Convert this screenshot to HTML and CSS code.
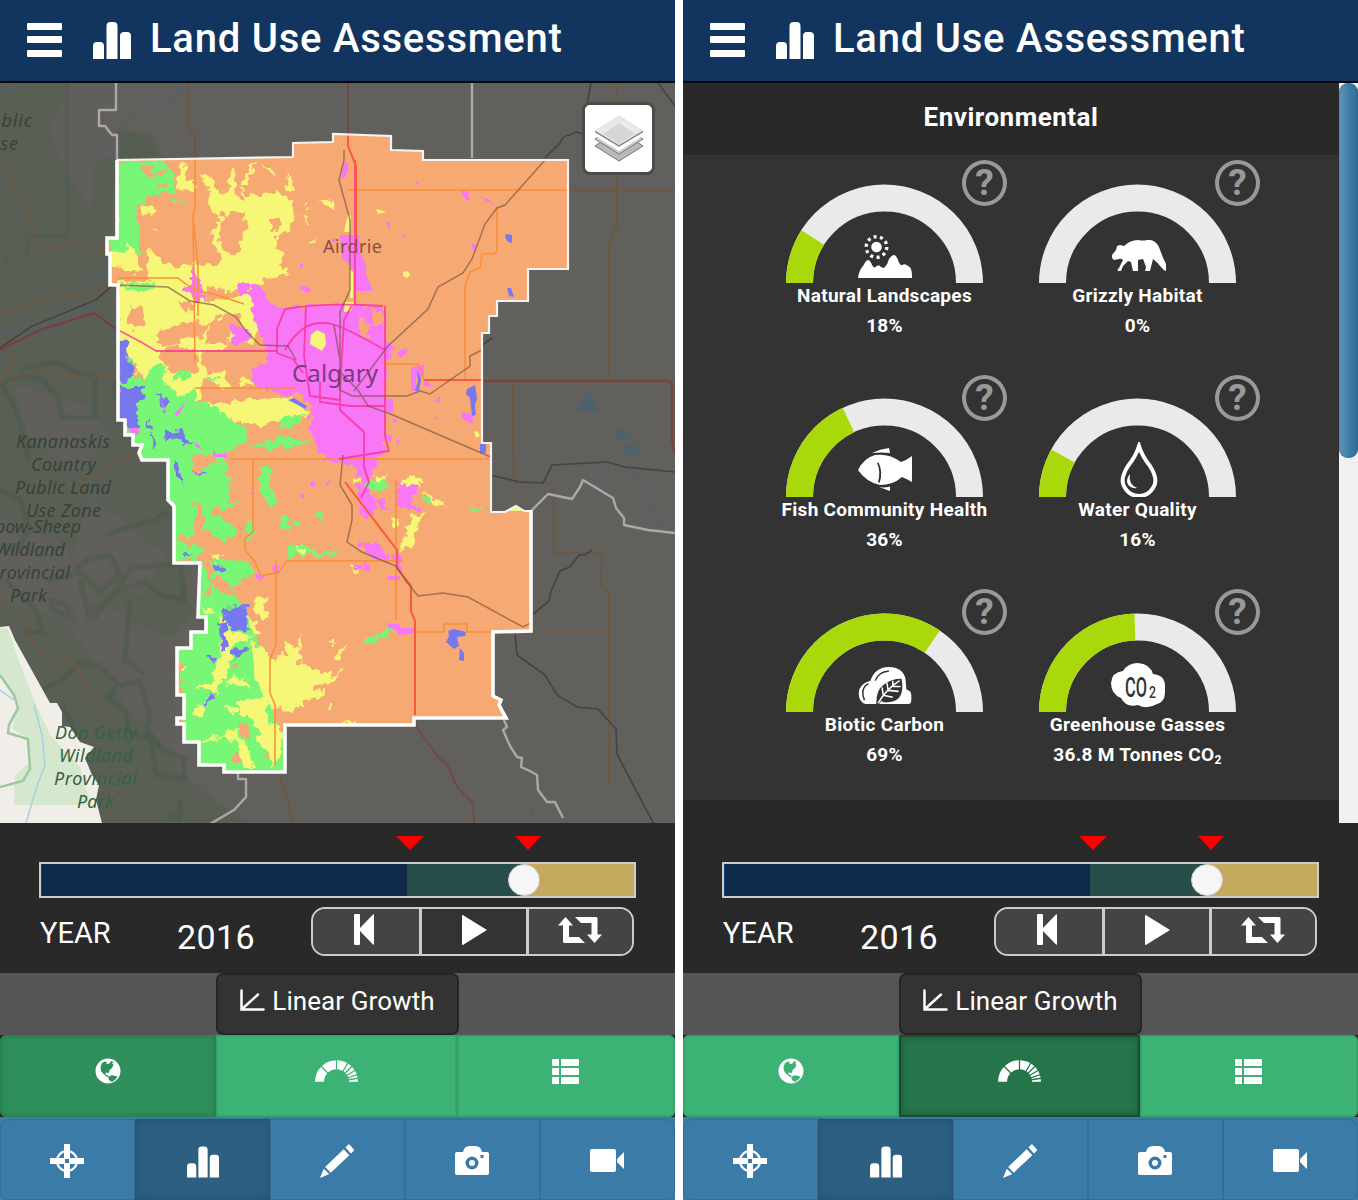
FILE: index.html
```html
<!DOCTYPE html>
<html lang="en">
<head>
<meta charset="utf-8">
<title>Land Use Assessment</title>
<link rel="stylesheet" href="styles.css">
</head>
<body>
<svg class="sprite" aria-hidden="true">
  <symbol id="i-menu" viewBox="0 0 35 34"><path d="M1 0h33q1 0 1 1v5q0 1-1 1H1q-1 0-1-1V1q0-1 1-1zm0 13h33q1 0 1 1v5q0 1-1 1H1q-1 0-1-1v-5q0-1 1-1zm0 14h33q1 0 1 1v5q0 1-1 1H1q-1 0-1-1v-5q0-1 1-1z"/></symbol>
  <symbol id="i-bars" viewBox="0 0 38 37"><path d="M0 37V24q0-4 4-4h3q4 0 4 4v13zM13.500 37V4q0-4 4-4h3q4 0 4 4v33zM27 37V14q0-4 4-4h3q4 0 4 4v23z"/></symbol>
  <symbol id="i-target" viewBox="0 0 34 34"><circle cx="17" cy="17" r="10" fill="none" stroke="currentColor" stroke-width="2.200"/><path fill-rule="evenodd" d="M14 0h6v14h14v6H20v14h-6V20H0v-6h14zM15 15v4h4v-4z"/></symbol>
  <symbol id="i-pencil" viewBox="0 0 34 34"><path d="M25.500 3.500 28 .7q.8-.8 1.700 0l4 4.600q.6.800-.2 1.600L31 9.500zM23.700 5.200l5.600 6-18.500 17.500-5.700-5.800zM3.700 24.700l5.600 5.400L0 34z"/></symbol>
  <symbol id="i-camera" viewBox="0 0 34 29"><path fill-rule="evenodd" d="M2 6h6q1-6 7-6h5q6 0 7 6h5q2 0 2 2v19q0 2-2 2H2q-2 0-2-2V8q0-2 2-2zm15 4.500a6.500 6.500 0 1 0 0 13 6.500 6.500 0 0 0 0-13zM25.500 9v3h3V9z"/><circle cx="17" cy="17" r="3"/></symbol>
  <symbol id="i-video" viewBox="0 0 34 23"><path d="M2 0h22q2 0 2 2v19q0 2-2 2H2q-2 0-2-2V2q0-2 2-2zM27 10l7-7v17l-7-7z"/></symbol>
  <symbol id="i-list" viewBox="0 0 27 25"><path d="M0 1q0-1 1-1h6v7H1q-1 0-1-1zM9 0h17q1 0 1 1v5q0 1-1 1H9zM0 10q0-1 1-1h6v7H1q-1 0-1-1zM9 9h17q1 0 1 1v5q0 1-1 1H9zM0 19q0-1 1-1h6v7H1q-1 0-1-1zM9 18h17q1 0 1 1v5q0 1-1 1H9z"/></symbol>
  <symbol id="i-globe" viewBox="0 0 26 26"><path fill-rule="evenodd" d="M13 .5a12.500 12.500 0 1 0 0 25 12.500 12.500 0 0 0 0-25zM10 3.500l2 .5-1 1.500 2 .5 2-1 1-2 3 1-2 1 1.500 2-1.500 3-2.500 2-.5 3-2.500-.5-1.500 1 1.500 1.500 1.500.5 1 2-2-.5-4-3.500L6 13l-.5-4L7 5zM14.500 18l3-.8 5 1.300-1.500 2.500-4 3-3-2-.5-2z"/></symbol>
  <symbol id="i-dial" viewBox="0 0 43 21.500"><path fill="none" stroke="currentColor" stroke-width="9" d="M4.500 21.500a17 17 0 0 1 34 0"/><path class="dial-cut" d="M21.500 21.500 4 4M21.500 21.500V0M21.500 21.500 34 1M21.500 21.500 37.500 5.500M21.500 21.500 41 9.500M21.500 21.500 43 14M21.500 21.500 43 18"/></symbol>
  <symbol id="i-prev" viewBox="0 0 20 31"><path d="M0 1q0-1 1-1h4q1 0 1 1v13L19 .5q1-.7 1 .5v29q0 1.200-1 .5L6 17v13q0 1-1 1H1q-1 0-1-1z"/></symbol>
  <symbol id="i-play" viewBox="0 0 25 30"><path d="M0 1q0-1.500 1.200-.7L25 15 1.200 29.700Q0 30.500 0 29z"/></symbol>
  <symbol id="i-repeat" viewBox="0 0 44 26"><path d="M7.500 0 15 8.500h-4V20H21l6 6H6.500q-1.500 0-1.500-1.500v-16H0zM17 0h21q1.500 0 1.500 1.500v16H44L36.500 26 29 17.500h4.500V6H23z"/></symbol>
  <symbol id="i-chart" viewBox="0 0 25 22"><path fill="none" stroke="currentColor" stroke-width="2.500" stroke-linecap="round" d="M1.500 1.500v19H23.500M2 20 18 5.500"/></symbol>
  <symbol id="g-land" viewBox="0 0 54 44"><circle cx="18.500" cy="13" r="5.300"/><circle cx="18.500" cy="13" r="10.300" fill="none" stroke="currentColor" stroke-width="3.300" stroke-dasharray="3 3.472"/><path d="M0 44q1-8 5-12 3-6 5-6t4 5q2 4 4 1.500 3-2 5 .5l3 1q4-4 5-9 3-4 5-4t4 5q2 6 4 5 3-2 6 1 4 1 4 10v2z"/></symbol>
  <symbol id="g-bear" viewBox="0 0 54 32"><path d="M0 15l4-5 1-4 3-1 4 1q6-6 14-6 5 1 9 0 8-1 12 7 3 9 7 17v7q-3-1-5-4-3-4-8-8l-3 12h-5l1-4-3-8-5 1v11h-5q-1-4-2-9l-3-1-5 5-2 5H6q-1-2 1-3l4-8q-2-2-4-1l-5 1q-2-1-2-3z"/></symbol>
  <symbol id="g-fish" viewBox="0 0 54 43"><path fill-rule="evenodd" d="M0 22Q6 10 17 7q14-2 26 7 6-2 11-6v26q-5-3-10-5-9 8-22 8Q8 34 0 22zM19 15q4 8 1 19l1.500 1q4-11-1-20.500z"/><path d="M14 5q8-4 17-5l1 5q-9-1-18 0zM21 39q5 1 11-.5V43z"/></symbol>
  <symbol id="g-drop" viewBox="0 0 38 56"><path fill="none" stroke="currentColor" stroke-width="4" d="M19 4q3 10 11 20 9 14 3 22-5 8-14 8T5 46q-6-8 3-22Q16 14 19 4z"/><path d="M10 32q-2 10 7 14-8 1-10-6 0-5 3-8z"/></symbol>
  <symbol id="g-carbon" viewBox="0 0 54 39"><path d="M7 38q-7-2-7-11 0-10 12-13Q17 0 31 0q14 0 17 12l1 11q5 1 5 6v5q0 4-4 4z"/><path class="ink" d="M18 38q0-15 8-20 7-6 18-6 4 22-12 24-6 1-9-1l-2 3z"/><path fill="none" stroke="#fff" stroke-width="1.600" d="M20 37Q28 23 42 14M25 28l-1-7M30 23l-1-7M35 19v-5M25 29l10 2M30 24l11 1M35 20h8"/><path class="ink-line" d="M10 17Q1 22 6 34M17 14q3-9 14-10"/></symbol>
  <symbol id="g-co2" viewBox="0 0 54 45"><path d="M10 35Q0 31 0 20 1 9 12 8q5-8 15-8 12 1 15 11 12 1 12 12v6q0 10-8 12-10 6-19 1-12 3-17-7z"/><text class="co2" x="14" y="34" textLength="22" lengthAdjust="spacingAndGlyphs" font-size="28">CO</text><text class="co2" x="38" y="35" font-size="17" textLength="7" lengthAdjust="spacingAndGlyphs">2</text></symbol>
</svg>

<main class="screens">
  <section class="screen">
    <header class="bar">
      <svg class="menu"><use href="#i-menu"/></svg>
      <svg class="logo"><use href="#i-bars"/></svg>
      <h1>Land Use Assessment</h1>
    </header>
    <div class="view">
      <svg class="map" viewBox="0 83 675 740">
        <defs>
          <clipPath id="region"><path d="M117 160 293 157V143L333 142V134L391 136V150L423 151V160H568V269H528V301H497V316H489V333H482V443H491V512H505L516 506 524 511H531V631L493 632V696L501 700 499 705 506 718H414V725H285V772H224V765H199V742H184V724H177V718H184V695H177V648H191V632H206V617H198L200 563H174V506L168 500V460H142L139 453 142 445H133V435H125V420H118V285H110V254H107V238H117Z"/></clipPath>
          <filter id="ragged" x="-2%" y="-2%" width="104%" height="104%"><feTurbulence type="fractalNoise" baseFrequency=".13" numOctaves="2" seed="9"/><feDisplacementMap in="SourceGraphic" scale="12" xChannelSelector="R" yChannelSelector="G"/><feGaussianBlur stdDeviation=".4"/></filter>
          <filter id="soft"><feGaussianBlur stdDeviation="1.200"/></filter>
        </defs>
        <rect y="83" width="675" height="740" fill="#62605d"/>
        <!-- foothills and forest reserves -->
        <g filter="url(#soft)">
          <path fill="#5a5f56" d="M0 83h112l-10 40 14 37-5 78 8 182 52 40 5 100 20 50-25 30 5 130 70 53H100L0 625z"/>
          <path fill="#615f5c" opacity=".8" d="M70 83h45v75H95l-5 50-30-50-10-30zM15 385l70 20 25 30-30 40-55-40zM0 520l60 20 20 40 45 40 50 20 5 120-50-50-65-90L0 600zM90 495l75 60-20 40-80-10z"/>
          <path fill="#555d51" d="M117 130l35 5 10 23h-45z"/>
          <g class="reserve">
            <path d="M67 83V236H27v20H8L0 268" stroke-width="2"/>
            <path d="M20 370l35-8 20 10 20 4v42H62l-4-20-15-18-15-4-28 6 12 20 10 25 6 34M115 380v20M105 535l30-10 20-5 10-8 15 10M75 570l15-12 20-3 10 20-20 16-20-18-35 8M95 610l16-12 20-30 50-4 3 36-20-4-20-14-28 10-20 24-4-10M50 600l16 4 6 14-18-7zM40 690l20-8 20-20 20 4 20 20 20-6 10 36-4 22-18-6-2-20-18-14 10-14M150 735l6 40 28 4v-20l-20-8zM180 800v18l-12-2"/>
            <path d="M0 490l20 10 10 30-15 20-15-4M80 580l10 40M130 600l-5 60 20 14M62 705l15 30M5 580l30 30 8 22H22"/>
          </g>
        </g>
        <g class="water-dim"><path d="M184 84l-15 18-10 5-20 3-12 12-9 8M86 143l16 10 10-8M0 90l20-4M0 335l40-12 60-20M86 285l30-18M610 468q-14 0-8 18l-8 14M615 470l18 3 18 15-2 14 4 20 22 4"/></g>
        <path fill="#4d626a" d="M589 389l7 14 2 9h-20v-8l6-3zM615 430l13 1 4 8-9 2 3 4 13 2 2 6-12 4-7-7 4-6-9-5zM529 811l5-3v6z"/>
        <g class="roads-dim">
          <path d="M188 83v45l7 8v25M616 83v20M617 175v50l-9 23v133M531 190h144M513 381v67l2 34 30 1q8 0 9 8v62h48l-1 30 8 10v190M531 632h80M0 155l26 53 10 40 45-5 30 12M0 315l42-16 45-4 25-12M10 346l3 18-13 20M10 382l30-12 45 8 33-2M145 450l-25 10-18 14-18 2-8 20M0 595l28 30 5 18 14 17 24-1 20 30 27 36M279 775l10 30 4 18"/>
          <path class="red" d="M348 83v52M415 725l24 33 8 6 10 23 16 16 1 20"/>
          <path class="red" stroke-width="2.500" d="M482 381h185q5 0 5 5v55l3 12"/>
          <path class="trans" d="M0 350l40-20 54-17 22 16"/>
        </g>
        <g class="rails-dim"><path d="M658 83l18 24M591 83l-4 22M545 158l15-15q3-8 10-8l6-3 8 2M490 475l30 7 23 1 9-18 55-3 18 5 50 5M592 550l-7 5h-6l-9 12-10 4-9 20-2 10-16 13M515 633l2 22 28 20 12 20 20 12 21 2 18 20 1 25 13 25 25 47M482 345l10-7M113 285l-16 14-30 13-35 14-32 22"/></g>
        <g class="county"><path d="M116 83V110H99v16h6l7 9h5v25M472 83v75M531 511l17-17 24 5 8-12 3-7 30 18 3 10 8 10v7l24 5 27 3M504 720l3 7-4 3 7 16 7 11 5 1-1 9 9 4 7 4 1 15 9 12h8l8 16M238 773v6h8v18l-12 13-24 14"/></g>
        <!-- British Columbia side -->
        <g>
          <path fill="#f1eee9" d="M0 627l9-1 6 14 35 63h7l5 9v14l8 1 10 15 14 5-9 11 7 17 7 10-3 15 6 23H0z"/>
          <path fill="#d5e8cd" d="M0 628l8 1 12 35 14 36 16 35 30 32 11 38H14l1-30 14-12-3-26-14-8 6-24-18-30z"/>
          <path fill="none" stroke="#9cc9a0" stroke-width="2.500" d="M0 675l14 20 4 13-9 17-1 8 20 6 2 30-7 12-23 6"/>
          <path fill="none" stroke="#a8cfe4" stroke-width="1.500" d="M34 705l8 30 3 30-9 24-10 34M0 690l14 10"/>
        </g>
        <!-- land cover of the calgary region -->
        <g clip-path="url(#region)">
          <path fill="#f7a974" d="M100 130h480v650H100z"/>
          <g filter="url(#ragged)">
            <path class="y" d="M200 172l7 1 8 14 5 6 8-3 5-25 3 15-2 15 9 5v-20l7-15 8-2-9 12-1 20h16l13-4 5 6 10 3 3 17-8 15-10 3v10l8 10-8 7 10 10-10 8-13-3-2 12-35 3-25-7-3-18 18-3 7-7-9-10-3-15 7-15-9-12-2-13zM176 180l8-18 4 20 6-2v12l-16-2zM288 172l7 20-8-2zM264 164l8 4 2 8-5-2zM303 202l5 4-4 2zM320 202l10-3 3 10-8-3zM300 216l9 2-2 6zM308 239l4-1 5 2-9 2zM140 208l9-3 6 3-4 8-10-2zM153 227l5 2-2 3zM118 208l8 32 18 32-10 2-24-10v-30zM148 248l8 6 8 10 10 5 20-6 10 4 4 25-35 2-20-5-30 2-6-12 18 4 15-3z"/>
            <path class="y" d="M118 287l60 2 30 12 44-6 6 20-4 28-25-3-8 12 6 28 4 10-27-12-3 22-24-2-12-14-18 2-12-20-18-32zM200 402l20 0 8 4 12-6 50-3 19 15-2 6-36 3-10 6-20-5-18-4zM240 378l35 2 6 10-20-5-22-2z"/>
            <path class="o" d="M222 214l22-2 3 12-5 20-7 13-11-6-6-14zM244 185h12l-3 12-8-2zM132 306l10 2 4 18-14 2-5-10zM160 330l28-9 20 4-5 14-15-2-22 10-10-4zM160 352l16-8 22 10 2 14-16 6-20-6zM204 348l24 2 28 3 6 18-20 5-19-4-15 2-6-10zM210 318l30-6 2 16-12 4-4 12h-20zM178 302l18 2-8 10zM270 218l10 2-2 10-8 4z"/>
            <path class="g" d="M118 161h50l2 9 4 10 2 13-18 0-12 5-4 7-5 2 4 28v20l-6 1-8-14-2 10-15-2v-12l8-1zM119 284l35-1 5 5-22 4zM170 198l18 4-14-1z"/>
            <path class="g" d="M131 358l6 20 8 7 5-18 12-2 3 20 20 13 8-10v12l22 5 15 15 17 8v12l-19 10-3 8 5 22-2 20 12 5-15 5-25-10-5 5v30l10 13-10 12-25 1-1-60-6-5v-35l-23-2-10-13-12-20 10-25-15-20zM172 374l18-4v8l-18 2zM206 377l14 0-12 4zM273 368l5-4v18l-5-1zM252 446l28-9 30 3-5 4-40 5zM278 418l28-4-8 10-17 5zM260 465h10l-1 18 4 12 6 8-8 3-11-14zM278 513l10 4 2 15-10-7zM313 515l12-3-4 12zM248 519l8 10-10 14zM292 522l9 0-6 9zM202 502l12-2-2 15 18 8 8 10-16 8-18-12zM286 546l16-1 15 7 22 1-10 5-24-5-18 6z"/>
            <path class="g" d="M199 562l26-3 23 2 7 12-14 8-8 10 10 16 14 26 8 24 12 24-4 30 14 30 0 40-62 2-26-10v-28l-17-5v-80h-10v-80l26-20z"/>
            <path class="o" d="M203 560l10 4 0 12 16 6 6 14-16-4-10-8zM202 590l9-1-2 8zM142 165l9 2 2 8 12-6 4 4-12 4-12-2zM156 187l12-5-2 7zM194 455l18 0 5 6-14 4-3 10-8-4zM178 535l20 2 8 12-12-4-14-2zM240 722l8 3 2 14-8-4zM233 750l9 6 10 4-10 5-10-4zM264 755l13-3-6 8zM230 663l10 1-6 5z"/>
            <path class="y" d="M255 597l14-1-6 8 6 12-8 2-7-6zM202 607l14 3-8 4zM220 612l8 18 20 6 12-1-4-12-8-8 6 20-22 12-4 24-12 22-4-4-16 2 4-5 12-4 6-20 2-16zM250 642l14 6 10 14 6-8 10 2-6-14 16 6-2 14 32 14 14-9-10 14-20 6 4 8-12 6-12 9-22-2-8-10-8-20zM240 700l26-2 2 26 14 2v20l-8 22-6-18-12-6 4-16-10-10-10-4zM200 742l24-8 16-10-4 10 14 16 4 18-10 0-6-24-16-8-22 10zM190 712l14-8-4 14zM224 706l16 2-8 6zM225 680l20-4 6 12-20-3zM179 667l9-1-4 6zM315 691l10 0-6 8zM328 704l5 0-2 6zM296 640l6-4-1 14zM328 641l8 0-4 4zM212 554l9 2-3 7z"/>
            <path class="b" d="M119 337l8 6 3 18 6 12-10 10h-8zM119 388h25l-1 12-7 5 2 22-10 0-10-10zM158 394l10 5-4 14-4-8zM146 418l6 12-5-1zM165 432l18-3 1 7 10 6-10 3-10-7-7 6zM171 458l8 8 4 18-6-6zM152 433l6 18-6-7zM195 471l12 1-8 4zM181 553l12 1-8 3zM213 562l8 3 5 7-12 1zM223 608l24-1 2 25-16-2-10-8zM216 620l9 5 4 22-7 2-2-16zM230 650l18-2-10 10-8-1zM206 657l12 0-5 8zM212 690l2 8-10 8z"/>
            <path class="p" d="M248 283l12 2 8 16 13 8 30-4 74 1v144l-10 15-4 15-7 6-10-20-30-6-14-28 1-22-8-16-22 1-24-8-6-8 2-12 14-2-2-26-10-15zM192 262l4 14 8 14-4 4 6 8-14-4-10-10 10-4zM238 283h10v14l-10 0zM230 325l18 4 4 10-16 6-4-8z"/>
            <path class="p" d="M355 485l14 2 8 20-8 14-8-6zM394 480l24 4-2 12-12-4zM396 490l12 2 10 18-14 0-10-10zM376 500l9-2v14zM360 542l20 0 0 8 12 8-14 3-16-10zM356 565l8-2-2 8zM392 555l9 0 2 20-6-3z"/>
            <path class="y" d="M400 482l16-6 6 8-20 2zM372 477l14-2-4 8zM352 477l8 3-6 4zM422 491l18 10 6 6-12-3zM410 516l16-3-7 10-8 24-13 3 8-12zM390 518l9 2-3 8zM348 566l12 0-4 8zM294 545l12 4-6 4zM333 656l16-12-10 16-6 1zM342 719l14 3-6 5z"/>
            <path class="g" d="M366 482l18-2 5 8-20 2zM424 496l10 5-10 1zM466 507l20 4-15 1zM360 640l18-7 18-8-8 12-20 5z"/>
            <path class="o" d="M358 318h9l2 20-8-3zM370 311h12v15l-8 3zM252 352h16l-4 10-12-2z"/>
          </g>
          <!-- hamlets and small lakes -->
          <path class="p" d="M344 163l4-1v9l-4 8-3-1zM340 235h19l2 19 5 10 0 10 7 17h-17l-2-18-4-8-8-7zM460 190l9 2-1 4 2 5-4-1zM480 197l8 2 8 7-10-5zM471 244h5l-1 9zM387 222h3v7l-3-2zM402 235l5 1-6 2zM416 181h3v3h-3zM380 342l8 0 8 7-6 2 2 8-8 1zM400 350l8-2-2 6-6 4-3-4zM411 368l13-4v12l-8 2v13h-5zM424 380l10 7-10-1zM385 398l8 1v14l-7-1zM392 418l7 2-5 3zM396 439l5 2-4 4zM461 412l12 2v9l-6-1-6-5zM427 399l8 2 5-5v7zM435 417h4l-4 4zM385 434l8 2-3 7zM388 623l12 1v4l14 0 0 5-14 2-6-6-6-1zM255 573l11 4-7 4-4-5zM272 566l8-1-3 11-4-5zM128 428h11v6h-8zM160 398l7 14-2 1zM186 402l-12 12 4 2zM195 441l8 9-7-3zM213 450v7h14v-3l-10 0zM310 482h5v5h-4zM325 483l6-3-4 6zM300 494h4v5l-3-1zM250 492h3v2h-3zM300 264h3v3h-3zM300 286h3v4h-3zM332 239h6v3h-6zM302 285l9 4-2 4-7-3zM365 565h5v6h-5zM352 567l7 1-4 3zM388 576h12v4h-12z"/>
          <path class="b" d="M506 234l6 1v8l-4-1-3-5zM507 288h4l3 9-5-1zM417 369l4 10-2 12h-4l3-10zM467 389l8-4 2 13-2 7 1 10-4 1-2-18-4-4zM480 444h6v9h-6zM448 631l6-2 12 3-1 4-8 1 2 9-5 3-8-7 3-6zM460 648l4 5v8l-5-1zM288 400l6-2 6 4 7 4-2 3-7-4z"/>
          <path class="y" d="M311 335l6-5 8 4 1 10-4 7-7-4-5-3zM376 209l4 1 6 2-8 2zM403 272l5-1 2 4-3 3-4-2zM348 214l3 2-1 16-6 0zM350 270l3 2v26h-3zM345 302h9l-3 9-7 1zM474 431l4 1 2 4-4 2zM502 511l14-6 6 6z"/>
          <g class="roads">
            <path d="M195 160v48l-2 8 5 50v50M193 216l2 145M348 190h220M497 207v42q0 5-6 5h-9l-2 14-10 4-5 14v95M195 388h100M229 459h265M253 460v72l-8 6v12l10 12 6 14 18-4 8-11h116M276 560v85l-6 14v34l5 12v60M396 480v140M416 632h28v-8h23v8h25M118 278l60 0 16 12 20 4 30 10M385 364h33l6 16"/>
            <path class="red" d="M355 160v145M120 331q20 10 36 20h122M385 306v130l4 15-50 8M285 309q40-7 98-3M285 309l-8 20v24l16 6 10 14M320 382v20l30 4h35M352 305l-8 15-4 70 0 20 24 22v35l5 15-8 16M306 306l-2 50 6 40 30 4M285 350q20-35 50-25 15 5 50 25"/>
            <path class="hot" d="M348 134v12l8 20v80M424 380h58M345 482l52 68v18l14 18v25l4 10v94"/>
          </g>
          <g class="rails"><path d="M545 160l-40 45-8 3-12 16-13 35-9 14-25 14-10 22-40 37-34 45M482 350l-12 6v10l-40 28-10-3-13 5H352l-12-6v-30l-6-35M344 150v10l-5 20 11 40v70l-10 22v60l18 18 10 16 25 9 100 43M343 455l-3 30 12 20v15l-5 22 15 10 34 14 10 15 12 15 25-3 25 4 55 30 25-14M118 285l50 2 22 14 24 4 22 12 10 14 14 14 28 1 8 14"/></g>
        </g>
        <path class="outline" d="M117 160 293 157V143L333 142V134L391 136V150L423 151V160H568V269H528V301H497V316H489V333H482V443H491V512H505L516 506 524 511H531"/>
        <path class="outline heavy" d="M531 510V631L493 632V696L501 700 499 705 506 718H414V725H285V772H224V765H199V742H184V724H177V718H184V695H177V648H191V632H206V617H198L200 563H174V506L168 500V460H142L139 453 142 445H133V435H125V420H118V285H110V254H107V238H117V160"/>
        <g class="names">
          <text x="-21" y="127" textLength="53">Public</text><text x="-13" y="150" textLength="31">Use</text>
          <text x="16" y="448" textLength="94">Kananaskis</text><text x="31" y="471" textLength="65">Country</text><text x="15" y="494" textLength="96">Public Land</text><text x="26" y="517" textLength="75">Use Zone</text>
          <text x="-19" y="533" textLength="100">Elbow-Sheep</text><text x="-5" y="556" textLength="70">Wildland</text><text x="-11" y="579" textLength="81">Provincial</text><text x="10" y="602" textLength="37">Park</text>
          <g class="lit"><text x="55" y="739" textLength="82">Don Getty</text><text x="59" y="762" textLength="74">Wildland</text><text x="54" y="785" textLength="83">Provincial</text><text x="77" y="808" textLength="37">Park</text></g>
        </g>
        <text class="town" x="323" y="253" textLength="59">Airdrie</text>
        <text class="city" x="292" y="382" textLength="86">Calgary</text>
      </svg>
      <button class="layers" aria-label="Layers">
        <svg viewBox="0 0 50 48"><path fill="#b9b9b9" stroke="#777" d="M25 15 49 31 25 46 1 31z"/><path fill="#ccc" stroke="#777" d="M25 8 49 24 25 39 1 24z"/><path fill="#fff" d="M25 2 49 17v4L25 36 1 21v-4z"/><path fill="#e9e9e9" stroke="#ccc" stroke-width=".5" d="M25 1 49 16 25 30 1 16z"/><path fill="#d6d6d6" d="M25 8 41 19 25 29 9 19z"/><path fill="none" stroke="#777" stroke-width="1.300" d="M1 16.500 25 31l24-14.500"/></svg>
      </button>
    </div>
    <div class="player">
      <div class="marks"><i></i><i></i></div>
      <div class="track"><span class="past"></span><span class="mid"></span><b class="knob"></b></div>
      <div class="controls">
        <span class="caption">YEAR</span><span class="year">2016</span>
        <div class="buttons"><button><svg class="prev"><use href="#i-prev"/></svg></button><button class="pressed"><svg class="play"><use href="#i-play"/></svg></button><button><svg class="repeat"><use href="#i-repeat"/></svg></button></div>
      </div>
    </div>
    <div class="scenario"><button><svg><use href="#i-chart"/></svg><span>Linear Growth</span></button></div>
    <nav class="tabs green"><a class="on"><svg class="globe"><use href="#i-globe"/></svg></a><a><svg class="dial"><use href="#i-dial"/></svg></a><a><svg class="list"><use href="#i-list"/></svg></a></nav>
    <nav class="tabs blue"><a><svg class="target"><use href="#i-target"/></svg></a><a class="on"><svg class="stats"><use href="#i-bars"/></svg></a><a><svg class="target"><use href="#i-pencil"/></svg></a><a><svg class="camera"><use href="#i-camera"/></svg></a><a><svg class="video"><use href="#i-video"/></svg></a></nav>
  </section>

  <section class="screen">
    <header class="bar">
      <svg class="menu"><use href="#i-menu"/></svg>
      <svg class="logo"><use href="#i-bars"/></svg>
      <h1>Land Use Assessment</h1>
    </header>
    <div class="view report">
      <div class="sheet">
        <h2>Environmental</h2>
        <div class="gauges">
          <article><svg viewBox="0 0 253 128"><path class="ring" d="M41.500 128a85 85 0 0 1 170 0"/><path class="ring fill" pathLength="100" stroke-dasharray="18 200" d="M41.500 128a85 85 0 0 1 170 0"/><use href="#g-land" x="100" y="79" width="54" height="44"/></svg><span class="help">?</span><h3>Natural Landscapes</h3><p>18%</p></article>
          <article><svg viewBox="0 0 253 128"><path class="ring" d="M41.500 128a85 85 0 0 1 170 0"/><use href="#g-bear" x="101" y="85" width="54" height="32"/></svg><span class="help">?</span><h3>Grizzly Habitat</h3><p>0%</p></article>
          <article><svg viewBox="0 0 253 128"><path class="ring" d="M41.500 128a85 85 0 0 1 170 0"/><path class="ring fill" pathLength="100" stroke-dasharray="36 200" d="M41.500 128a85 85 0 0 1 170 0"/><use href="#g-fish" x="100" y="79" width="54" height="43"/></svg><span class="help low">?</span><h3>Fish Community Health</h3><p>36%</p></article>
          <article><svg viewBox="0 0 253 128"><path class="ring" d="M41.500 128a85 85 0 0 1 170 0"/><path class="ring fill" pathLength="100" stroke-dasharray="16 200" d="M41.500 128a85 85 0 0 1 170 0"/><use href="#g-drop" x="109" y="73" width="38" height="56"/></svg><span class="help low">?</span><h3>Water Quality</h3><p>16%</p></article>
          <article><svg viewBox="0 0 253 128"><path class="ring" d="M41.500 128a85 85 0 0 1 170 0"/><path class="ring fill" pathLength="100" stroke-dasharray="69 200" d="M41.500 128a85 85 0 0 1 170 0"/><use href="#g-carbon" x="100" y="83" width="54" height="38"/></svg><span class="help">?</span><h3>Biotic Carbon</h3><p>69%</p></article>
          <article><svg viewBox="0 0 253 128"><path class="ring" d="M41.500 128a85 85 0 0 1 170 0"/><path class="ring fill" pathLength="100" stroke-dasharray="49 200" d="M41.500 128a85 85 0 0 1 170 0"/><use href="#g-co2" x="100" y="79" width="54" height="45"/></svg><span class="help">?</span><h3>Greenhouse Gasses</h3><p>36.8 M Tonnes CO<sub>2</sub></p></article>
        </div>
      </div>
      <div class="scroll"><span></span></div>
    </div>
    <div class="player">
      <div class="marks"><i></i><i></i></div>
      <div class="track"><span class="past"></span><span class="mid"></span><b class="knob"></b></div>
      <div class="controls">
        <span class="caption">YEAR</span><span class="year">2016</span>
        <div class="buttons"><button><svg class="prev"><use href="#i-prev"/></svg></button><button><svg class="play"><use href="#i-play"/></svg></button><button><svg class="repeat"><use href="#i-repeat"/></svg></button></div>
      </div>
    </div>
    <div class="scenario"><button><svg><use href="#i-chart"/></svg><span>Linear Growth</span></button></div>
    <nav class="tabs green deep"><a><svg class="globe"><use href="#i-globe"/></svg></a><a class="on"><svg class="dial"><use href="#i-dial"/></svg></a><a><svg class="list"><use href="#i-list"/></svg></a></nav>
    <nav class="tabs blue"><a><svg class="target"><use href="#i-target"/></svg></a><a class="on"><svg class="stats"><use href="#i-bars"/></svg></a><a><svg class="target"><use href="#i-pencil"/></svg></a><a><svg class="camera"><use href="#i-camera"/></svg></a><a><svg class="video"><use href="#i-video"/></svg></a></nav>
  </section>
</main>
</body>
</html>
```
FILE: styles.css
```css
* { box-sizing: border-box; }
body { margin: 0; background: #fff; color: #fff; font-family: Roboto, "Liberation Sans", sans-serif; }
h1, h2, h3, p { margin: 0; }
svg { display: block; fill: currentColor; flex: none; }
button { margin: 0; padding: 0; border: 0; color: inherit; font: inherit; }
.sprite { position: absolute; width: 0; height: 0; }

.screens { display: grid; grid-template-columns: 675px 675px; gap: 8px; height: 1200px; }
.screen { display: grid; grid-template-rows: 83px 740px 150px 62px 82px 83px; overflow: hidden; background: #292929; }

.bar { display: flex; align-items: flex-start; background: #12355f; border-bottom: 2px solid #05070a; padding-left: 27px; }
.menu { width: 35px; height: 34px; margin-top: 23px; }
.logo { width: 38px; height: 37px; margin: 22px 0 0 31px; }
.bar h1 { margin-left: 19px; font-size: 40px; line-height: 46px; padding-top: 16px; font-weight: 500; letter-spacing: .76px; white-space: nowrap; }

.view { position: relative; overflow: hidden; }
.map { width: 675px; height: 740px; }
.layers { position: absolute; left: 582px; top: 19px; width: 73px; height: 73px; border: 3px solid #4c4b49; border-radius: 8px; background: #fff; display: flex; justify-content: center; align-items: center; }
.layers svg { width: 50px; height: 48px; }

.y { fill: #f7f777; }
.g { fill: #78f777; }
.o { fill: #f7a974; }
.b { fill: #7777ef; }
.p { fill: #f777f7; }
.reserve { fill: none; stroke: #4a5a48; stroke-width: 5; opacity: .6; }
.water-dim { fill: none; stroke: #50626c; stroke-width: 1.5; }
.roads-dim { fill: none; stroke: #70563b; stroke-width: 1.6; }
.roads-dim .red { stroke: #78453d; }
.roads-dim .trans { stroke: #7a3a4b; stroke-width: 2; }
.rails-dim { fill: none; stroke: #464441; stroke-width: 1.7; }
.county { fill: none; stroke: #a9a9a7; stroke-width: 2.4; stroke-linejoin: round; }
.roads { fill: none; stroke: #f98e38; stroke-width: 1.5; }
.roads .red { stroke: #f92a94; stroke-width: 1.8; opacity: .75; }
.roads .hot { stroke: #fb5a3a; stroke-width: 2; }
.rails { fill: none; stroke: #77513f; stroke-width: 1.5; opacity: .65; }
.outline { fill: none; stroke: #f4f4f4; stroke-width: 2.2; }
.outline.heavy { stroke: #fff; stroke-width: 3.6; }
.names { font: italic 18px "Noto Sans", sans-serif; fill: #354437; }
.names .lit { fill: #35623f; }
.town { font: 18px "Noto Sans", sans-serif; fill: #8e4b43; }
.city { font: 24px "Noto Sans", sans-serif; fill: #773c7c; }

.player { background: #292929; padding: 13px 39px 0; }
.marks { position: relative; height: 14px; }
.marks i { position: absolute; top: 0; left: 357px; border: 14px solid transparent; border-top-color: #f00; border-bottom: 0; }
.marks i + i { left: 476px; border-left-width: 13.5px; border-right-width: 13.5px; }
.track { position: relative; display: flex; margin-top: 12px; width: 597px; height: 36px; border: 2px solid #ccc; background: #c4a95f; }
.past { width: 366px; background: #0f2a4a; box-shadow: inset 1px 0 0 #174477; }
.mid { width: 117px; background: #284e4a; }
.knob { position: absolute; left: 467px; top: 0; width: 32px; height: 32px; border-radius: 50%; background: #f6f6f6; border: 1.5px solid #ccc; }
.controls { display: flex; margin-top: 9px; height: 49px; }
.caption { width: 138px; font-size: 29px; line-height: 34px; padding: 9px 0 0 1px; }
.year { width: 134px; font-size: 34px; line-height: 40px; padding-top: 10px; letter-spacing: .4px; }
.buttons { display: grid; grid-template-columns: 109px 107px 103px; height: 49px; border: 2px solid #ccc; border-radius: 14px; background: #444; width: 323px; overflow: hidden; }
.buttons button { display: flex; justify-content: center; align-items: center; background: #444; padding-bottom: 4px; border-right: 3px solid #ccc; }
.buttons button:first-child { padding-right: 4px; }
.buttons button:last-child { border-right: 0; padding-right: 2px; }
.buttons .pressed { background: #333; }
.prev { width: 20px; height: 31px; }
.play { width: 25px; height: 30px; }
.repeat { width: 44px; height: 26px; }

.scenario { background: #555; display: flex; justify-content: center; }
.scenario button { width: 243px; height: 62px; border: 2px solid #252525; border-radius: 7px; background: #333; display: flex; align-items: center; justify-content: center; gap: 7px; font-size: 26px; letter-spacing: .08px; padding-bottom: 6px; white-space: nowrap; }
.scenario svg { width: 25px; height: 22px; margin-bottom: 3px; }

.tabs { display: grid; }
.tabs a { display: flex; align-items: center; justify-content: center; }
.green { grid-template-columns: 216px 241px 218px; background: #222; --cut: #3cb274; }
.green a { background: #3cb274; box-shadow: inset 0 0 0 1.5px #35a067; padding-bottom: 10px; padding-right: 1px; }
.green a:first-child { border-radius: 6px 0 0 6px; }
.green a:last-child { border-radius: 0 6px 6px 0; }
.green .on { background: #2f8f5b; box-shadow: inset 0 0 5px 2px #287c4d; }
.deep .on { --cut: #26744a; background: #26744a; box-shadow: inset 0 0 0 2px #194c30, inset 0 0 7px 2px #1d5b39; }
.dial-cut { fill: none; stroke: var(--cut); stroke-width: 1.3; }
.globe { width: 26px; height: 26px; }
.dial { width: 43px; height: 22px; }
.list { width: 27px; height: 25px; }
.blue { grid-template-columns: repeat(5, 135px); background: #3b7ba8; padding-top: 2px; }
.blue a { border: 1.5px solid #336e96; padding: 2px 1px 0 0; }
.blue a:first-child { border-radius: 10px 0 0 8px; }
.blue a:last-child { border-radius: 0 10px 8px 0; }
.blue .on { background: #2c5f80; border-color: #255371; box-shadow: inset 0 0 6px 2px #28577a; }
.blue a.on { padding-right: 0; padding-left: 1px; }
.target { width: 34px; height: 34px; }
.stats { width: 32px; height: 32px; margin-top: 2px; }
.camera { width: 34px; height: 29px; }
.video { width: 34px; height: 23px; }

.report { display: grid; grid-template-columns: 656px 19px; }
.sheet { background: #292929; }
.sheet h2 { height: 72px; font-size: 26px; line-height: 68px; font-weight: 700; letter-spacing: .5px; text-align: center; }
.gauges { display: grid; grid-template-columns: 253px 253px; grid-template-rows: 214px 215px 216px; background: #333; padding-left: 75px; }
.gauges article { position: relative; text-align: center; }
.gauges svg { width: 253px; height: 128px; }
.ring { fill: none; stroke: #eaeaea; stroke-width: 27; }
.ring.fill { stroke: #a9d80b; }
.ink { fill: #333; }
.ink-line { fill: none; stroke: #333; stroke-width: 1.5; }
.co2 { fill: #333; font-family: Roboto, sans-serif; font-weight: 500; }
.help { position: absolute; left: 204px; top: 5px; width: 45px; height: 46px; border: 4px solid #999; border-radius: 50%; color: #999; font-size: 37px; font-weight: 700; line-height: 38px; }
.help.low { top: 6px; }
.gauges h3, .gauges p { font-size: 19px; font-weight: 700; line-height: 30px; letter-spacing: .3px; white-space: nowrap; margin-top: -2px; }
.gauges p { margin-top: 0; }
.gauges sub { font-size: 12px; vertical-align: -3px; line-height: 0; }
.scroll { background: #f1f1f1; }
.scroll span { display: block; height: 375px; border-radius: 9px; background: linear-gradient(90deg, #6297bd, #3f7fa9 50%, #2f6c94); box-shadow: inset 0 0 2px #2b6084; }
```
